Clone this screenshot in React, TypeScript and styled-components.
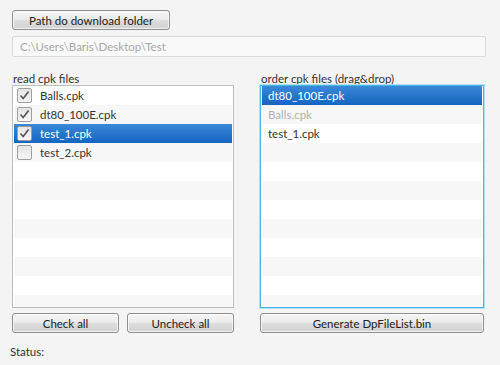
import { createGlobalStyle } from 'styled-components'
import styled from 'styled-components'

const GlobalStyle = createGlobalStyle`
  html, body {
    margin: 0;
    padding: 0;
    background: #f4f4f4;
  }
  body {
    font-family: Lato, 'Open Sans', sans-serif;
    font-size: 11.5px;
    color: #333;
  }
`

type ReadItem = { name: string; checked: boolean; selected?: boolean }

const readFiles: ReadItem[] = [
  { name: 'Balls.cpk', checked: true },
  { name: 'dt80_100E.cpk', checked: true },
  { name: 'test_1.cpk', checked: true, selected: true },
  { name: 'test_2.cpk', checked: false },
]

type OrderItem = { name: string; selected?: boolean; disabled?: boolean }

const orderFiles: OrderItem[] = [
  { name: 'dt80_100E.cpk', selected: true },
  { name: 'Balls.cpk', disabled: true },
  { name: 'test_1.cpk' },
]

const ROWS = 12

export default function App() {
  return (
    <Root>
      <GlobalStyle />
      <Button $width="158px">Path do download folder</Button>
      <PathField>C:\Users\Baris\Desktop\Test</PathField>

      <Columns>
        <Column>
          <Label>read cpk files</Label>
          <ListView>
            {Array.from({ length: ROWS }).map((_, i) => {
              const item = readFiles[i]
              return (
                <Row key={i} $odd={i % 2 === 1} $selected={!!item?.selected}>
                  {item && (
                    <>
                      <CheckBox>
                        {item.checked && (
                          <svg width="11" height="11" viewBox="0 0 11 11">
                            <path
                              d="M1.5 5.5 L4.2 8.6 L9.6 1.6"
                              fill="none"
                              stroke="#555"
                              strokeWidth="1.6"
                            />
                          </svg>
                        )}
                      </CheckBox>
                      <span>{item.name}</span>
                    </>
                  )}
                </Row>
              )
            })}
          </ListView>
          <ButtonRow>
            <Button>Check all</Button>
            <Button>Uncheck all</Button>
          </ButtonRow>
        </Column>

        <Column>
          <Label>order cpk files (drag&amp;drop)</Label>
          <ListView $focused>
            {Array.from({ length: ROWS }).map((_, i) => {
              const item = orderFiles[i]
              return (
                <Row
                  key={i}
                  $odd={i % 2 === 1}
                  $selected={!!item?.selected}
                  $disabled={!!item?.disabled}
                  $plain
                >
                  {item?.name}
                </Row>
              )
            })}
          </ListView>
          <ButtonRow>
            <Button>Generate DpFileList.bin</Button>
          </ButtonRow>
        </Column>
      </Columns>

      <Status>Status:</Status>
    </Root>
  )
}

const Root = styled.div`
  width: 500px;
  height: 365px;
  box-sizing: border-box;
  padding: 10px 14px 0 12px;
  display: flex;
  flex-direction: column;
  align-items: flex-start;
`

const Button = styled.div<{ $width?: string }>`
  box-sizing: border-box;
  width: ${(p) => p.$width ?? 'auto'};
  flex: ${(p) => (p.$width ? 'none' : '1')};
  height: 20px;
  display: flex;
  align-items: center;
  justify-content: center;
  border: 1px solid #8f8f8f;
  border-radius: 3px;
  background: linear-gradient(#f6f6f6 0%, #ebebeb 45%, #dcdcdc 55%, #d2d2d2 100%);
  box-shadow: inset 0 0 0 1px rgba(255, 255, 255, 0.7);
  color: #222;
  white-space: nowrap;
`

const PathField = styled.div`
  box-sizing: border-box;
  margin-top: 6px;
  width: 474px;
  height: 21px;
  padding: 0 7px;
  display: flex;
  align-items: center;
  border: 1px solid #dadada;
  border-radius: 2px;
  background: #f9f9f9;
  color: #a8a8a8;
`

const Columns = styled.div`
  margin-top: 15px;
  width: 474px;
  display: grid;
  grid-template-columns: 222px 224px;
  column-gap: 26px;
`

const Column = styled.div`
  display: flex;
  flex-direction: column;
`

const Label = styled.div`
  height: 13px;
  line-height: 13px;
  padding-left: 1px;
  color: #333;
`

const ListView = styled.div<{ $focused?: boolean }>`
  box-sizing: border-box;
  height: 223px;
  overflow: hidden;
  background: #fff;
  border: 1px solid ${(p) => (p.$focused ? '#48b6e0' : '#bdbdbd')};
  box-shadow: ${(p) => (p.$focused ? '0 0 0 1px #aee0f3' : 'none')};
  padding: 0 1px;
`

const Row = styled.div<{
  $odd: boolean
  $selected: boolean
  $disabled?: boolean
  $plain?: boolean
}>`
  height: 19px;
  display: flex;
  align-items: center;
  gap: 8px;
  padding-left: ${(p) => (p.$plain ? '6px' : '3px')};
  background: ${(p) =>
    p.$selected
      ? 'linear-gradient(#3a88d8, #1565c0)'
      : p.$odd
        ? '#f7f7f7'
        : '#fff'};
  color: ${(p) => (p.$selected ? '#fff' : p.$disabled ? '#b0b0b0' : '#333')};
  white-space: nowrap;
`

const CheckBox = styled.div`
  box-sizing: border-box;
  width: 15px;
  height: 15px;
  display: flex;
  align-items: center;
  justify-content: center;
  border: 1px solid #9e9e9e;
  border-radius: 2px;
  background: linear-gradient(#e4e4e4, #f6f6f6);
  flex-shrink: 0;
`

const ButtonRow = styled.div`
  margin-top: 5px;
  display: flex;
  gap: 8px;
`

const Status = styled.div`
  margin-top: 12px;
  margin-left: -2px;
  color: #333;
`
